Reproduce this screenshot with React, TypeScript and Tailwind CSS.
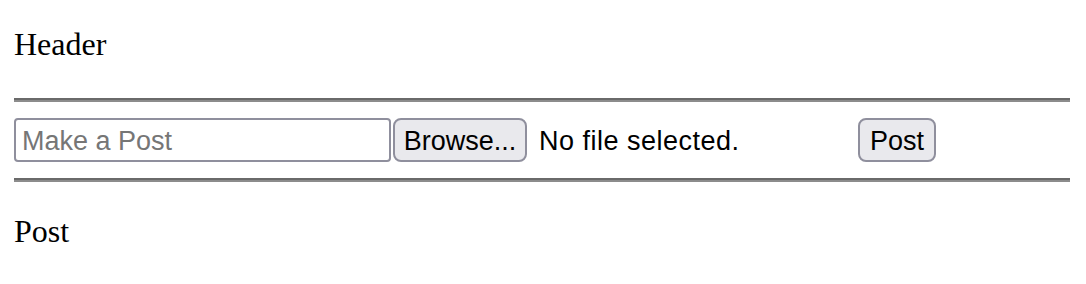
export default function App() {
  return (
    <div className="w-[1086px] h-[284px] bg-white text-black pl-[14px] pr-[16px] pt-[26px]">
      <div className="text-[32px] leading-[36px]" style={{ fontFamily: '"Liberation Serif", "Times New Roman", serif' }}>
        Header
      </div>
      <div className="mt-[36px] border-t-2 border-b-2 border-t-[#6a6a6a] border-b-[#8c8c8c]" />
      <div
        className="mt-[16px] flex items-center h-[44px] text-[27px]"
        style={{ fontFamily: '"Liberation Sans", Arial, sans-serif' }}
      >
        <input
          type="text"
          placeholder="Make a Post"
          className="w-[377px] h-[44px] border-2 border-[#8f8f9d] rounded-[4px] pl-[6px] pt-[2px] text-[27px] leading-[30px] placeholder:text-[#767676] outline-none bg-white"
        />
        <div className="ml-[2px] w-[465px] flex items-center">
          <button className="w-[134px] h-[44px] pt-[2px] bg-[#e9e9ed] border-2 border-[#8f8f9d] rounded-[8px] text-[27px] leading-[30px] text-black flex items-center justify-center">
            Browse...
          </button>
          <span className="ml-[12px] pt-[2px] leading-[30px] tracking-[0.5px]">No file selected.</span>
        </div>
        <button className="w-[78px] h-[44px] pt-[2px] bg-[#e9e9ed] border-2 border-[#8f8f9d] rounded-[8px] text-[27px] leading-[30px] text-black flex items-center justify-center">
          Post
        </button>
      </div>
      <div className="mt-[16px] border-t-2 border-b-2 border-t-[#6a6a6a] border-b-[#8c8c8c]" />
      <div className="mt-[31px] text-[32px] leading-[36px]" style={{ fontFamily: '"Liberation Serif", "Times New Roman", serif' }}>
        Post
      </div>
    </div>
  );
}
